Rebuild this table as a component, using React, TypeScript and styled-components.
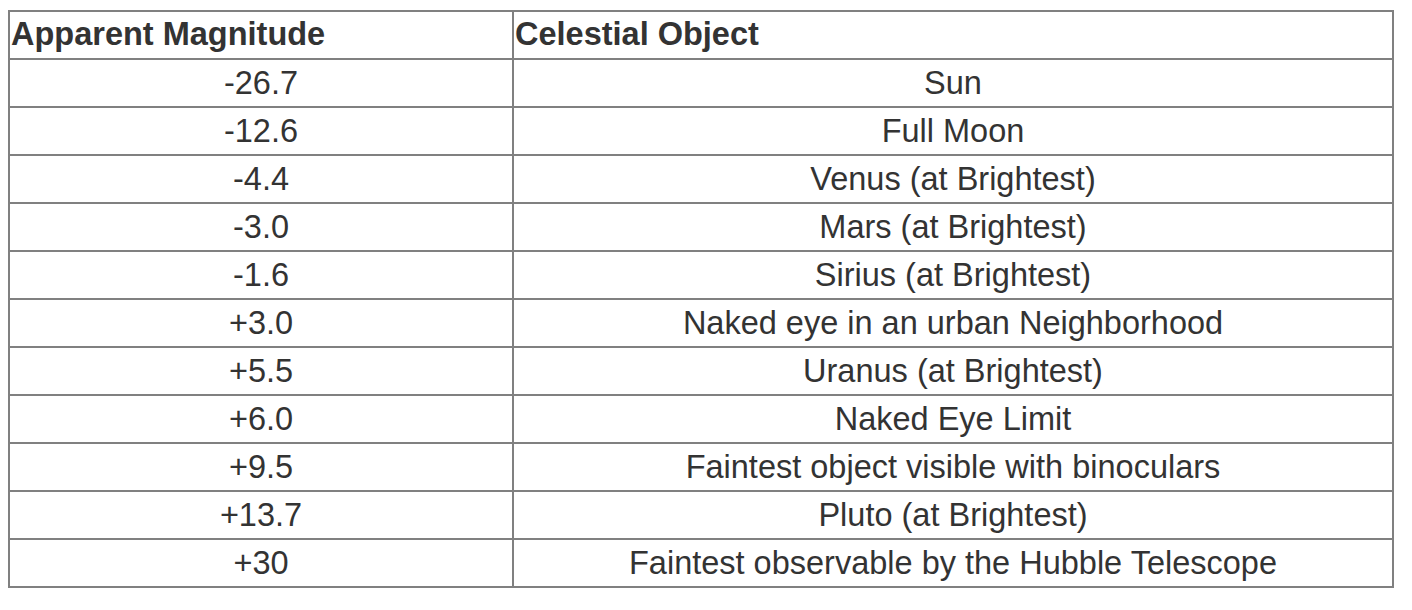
import React from "react";
import styled, { createGlobalStyle } from "styled-components";

const GlobalStyle = createGlobalStyle`
  html, body {
    margin: 0;
    padding: 0;
    background: #ffffff;
  }
  body {
    padding: 10px 8px 8px 8px;
    font-family: "Liberation Sans", Arial, Helvetica, sans-serif;
    color: #333333;
  }
`;

const Table = styled.table`
  border-collapse: separate;
  border-spacing: 0;
  width: 1386px;
  table-layout: fixed;
  border-top: 2px solid #808080;
  border-left: 2px solid #808080;
  font-family: "Liberation Sans", Arial, Helvetica, sans-serif;
  font-size: 32.5px;
  color: #333333;
`;

const Col = styled.col<{ $w: number }>`
  width: ${(p) => p.$w}px;
`;

const HeadCell = styled.th`
  text-align: left;
  font-weight: 700;
  line-height: 45px;
  padding: 0 1px 1px 1px;
  border-right: 2px solid #808080;
  border-bottom: 2px solid #808080;
  white-space: nowrap;
  overflow: hidden;
`;

const Cell = styled.td`
  text-align: center;
  font-weight: 400;
  line-height: 45px;
  padding: 1px 1px 0 1px;
  border-right: 2px solid #808080;
  border-bottom: 2px solid #808080;
  white-space: nowrap;
`;

const rows: [string, string][] = [
  ["-26.7", "Sun"],
  ["-12.6", "Full Moon"],
  ["-4.4", "Venus (at Brightest)"],
  ["-3.0", "Mars (at Brightest)"],
  ["-1.6", "Sirius (at Brightest)"],
  ["+3.0", "Naked eye in an urban Neighborhood"],
  ["+5.5", "Uranus (at Brightest)"],
  ["+6.0", "Naked Eye Limit"],
  ["+9.5", "Faintest object visible with binoculars"],
  ["+13.7", "Pluto (at Brightest)"],
  ["+30", "Faintest observable by the Hubble Telescope"],
];

export default function App() {
  return (
    <>
      <GlobalStyle />
      <Table>
        <colgroup>
          <Col $w={504} />
          <Col $w={880} />
        </colgroup>
        <thead>
          <tr>
            <HeadCell>Apparent Magnitude</HeadCell>
            <HeadCell>Celestial Object</HeadCell>
          </tr>
        </thead>
        <tbody>
          {rows.map(([mag, obj]) => (
            <tr key={mag}>
              <Cell>{mag}</Cell>
              <Cell>{obj}</Cell>
            </tr>
          ))}
        </tbody>
      </Table>
    </>
  );
}
